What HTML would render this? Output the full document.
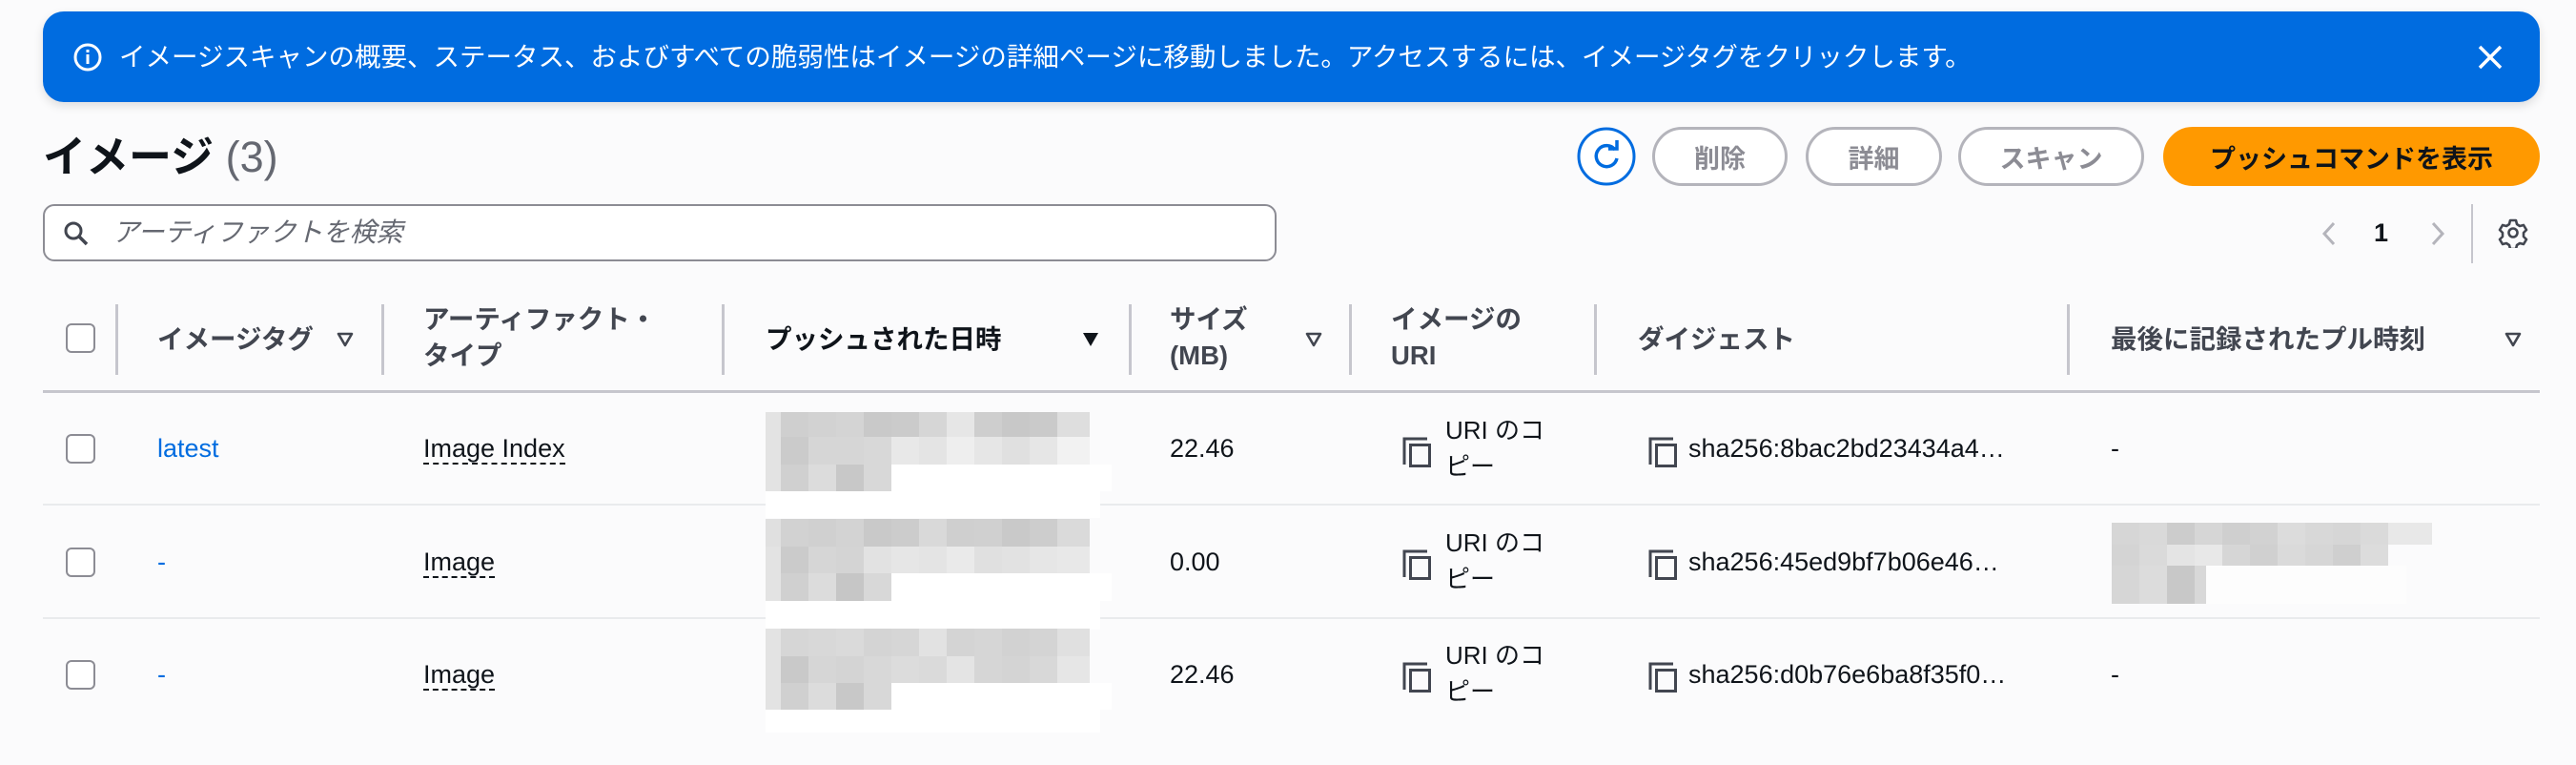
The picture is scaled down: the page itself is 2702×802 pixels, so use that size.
<!DOCTYPE html>
<html><head><meta charset="utf-8"><style>
*{box-sizing:border-box;margin:0;padding:0}
body{width:2702px;height:802px;background:#fbfbfc;font-family:"Liberation Sans","Noto Sans CJK JP",sans-serif;position:relative;overflow:hidden;color:#0f141a}
.a{position:absolute;white-space:nowrap}
.banner{left:45px;top:12px;width:2619px;height:95px;background:#006ce0;border-radius:22px;box-shadow:0 4px 10px rgba(0,0,0,.12)}
.btn{position:absolute;top:133px;height:62px;border:3px solid #b4b4bb;border-radius:31px;color:#8c8c94;font-size:27px;font-weight:bold;display:flex;align-items:center;justify-content:center;background:#fff}
.hd{position:absolute;font-size:27.5px;font-weight:bold;color:#424650;line-height:38px}
.div{position:absolute;top:319px;width:3px;height:74px;background:#c6c6cd}
.cb{position:absolute;left:69px;width:31px;height:31px;border:2px solid #8c8c94;border-radius:6px;background:#fff}
.td{position:absolute;font-size:27px;color:#0f141a;line-height:38px}
.sep{position:absolute;left:45px;width:2619px;height:2px;background:#e9ebed}
.dash{border-bottom:2px dashed #0f141a}
.band{position:absolute;display:flex}
.band span{display:block;width:29px;height:100%}
</style></head><body>
<div class="a banner"></div>
<svg class="a" style="left:76px;top:44px" width="32" height="32" viewBox="0 0 32 32"><circle cx="16" cy="16" r="13" fill="none" stroke="#fff" stroke-width="3"/><rect x="14.5" y="13" width="3" height="10" fill="#fff"/><rect x="14.5" y="8" width="3" height="3" fill="#fff"/></svg>
<div class="a" style="left:125px;top:42px;font-size:27.5px;color:#fff;line-height:36px">イメージスキャンの概要、ステータス、およびすべての脆弱性はイメージの詳細ページに移動しました。アクセスするには、イメージタグをクリックします。</div>
<svg class="a" style="left:2598px;top:46px" width="28" height="28" viewBox="0 0 28 28"><path d="M3 3L25 25M25 3L3 25" stroke="#fff" stroke-width="3.5"/></svg>

<div class="a" style="left:45px;top:136px;font-size:45px;font-weight:bold;line-height:58px">イメージ <span style="font-weight:normal;color:#656871">(3)</span></div>

<svg class="a" style="left:1654px;top:133px" width="62" height="62" viewBox="0 0 62 62"><circle cx="31" cy="31" r="29" fill="#fff" stroke="#006ce0" stroke-width="3"/><path d="M40 24A11 11 0 1 0 42 33" fill="none" stroke="#006ce0" stroke-width="3.5"/><path d="M33 23L42 23L42 14" fill="none" stroke="#006ce0" stroke-width="3.5"/></svg>
<div class="btn" style="left:1733px;width:142px">削除</div>
<div class="btn" style="left:1894px;width:143px">詳細</div>
<div class="btn" style="left:2054px;width:195px">スキャン</div>
<div class="btn" style="left:2269px;width:395px;background:#ff9900;border-color:#ff9900;color:#0f141a">プッシュコマンドを表示</div>

<div class="a" style="left:45px;top:214px;width:1294px;height:60px;border:2px solid #8c8c94;border-radius:12px;background:#fff"></div>
<svg class="a" style="left:66px;top:231px" width="28" height="28" viewBox="0 0 28 28"><circle cx="11" cy="11" r="8" fill="none" stroke="#424650" stroke-width="3"/><path d="M17 17L25 25" stroke="#424650" stroke-width="3.5"/></svg>
<div class="a" style="left:118px;top:225px;font-size:28px;font-style:italic;color:#656871;line-height:38px">アーティファクトを検索</div>

<svg class="a" style="left:2433px;top:231px" width="20" height="28" viewBox="0 0 20 28"><path d="M15 3L5 14L15 25" fill="none" stroke="#b4b4bb" stroke-width="3"/></svg>
<div class="a" style="left:2490px;top:226px;font-size:27px;font-weight:bold;line-height:36px">1</div>
<svg class="a" style="left:2547px;top:231px" width="20" height="28" viewBox="0 0 20 28"><path d="M5 3L15 14L5 25" fill="none" stroke="#b4b4bb" stroke-width="3"/></svg>
<div class="a" style="left:2592px;top:214px;width:2px;height:62px;background:#c6c6cd"></div>
<svg class="a" style="left:2620px;top:228px" width="32" height="32" viewBox="0 0 32 32"><path d="M13 3h6l1 4 3 2 4-1 3 5-3 3v4l3 3-3 5-4-1-3 2-1 4h-6l-1-4-3-2-4 1-3-5 3-3v-4L2 13l3-5 4 1 3-2z" fill="none" stroke="#424650" stroke-width="2.6" stroke-linejoin="round"/><circle cx="16" cy="16" r="4.5" fill="none" stroke="#424650" stroke-width="2.6"/></svg>

<div class="cb" style="top:339px"></div>
<div class="div" style="left:121px"></div>
<div class="hd" style="left:165px;top:337px">イメージタグ</div>
<svg class="a" style="left:352px;top:346px" width="20" height="20" viewBox="0 0 20 20"><path d="M3 4H17L10 16Z" fill="none" stroke="#424650" stroke-width="2.6" stroke-linejoin="round"/></svg>
<div class="div" style="left:400px"></div>
<div class="hd" style="left:444px;top:316px">アーティファクト・<br>タイプ</div>
<div class="div" style="left:757px"></div>
<div class="hd" style="left:803px;top:337px;color:#0f141a">プッシュされた日時</div>
<svg class="a" style="left:1134px;top:346px" width="20" height="20" viewBox="0 0 20 20"><path d="M2 3H18L10 17Z" fill="#0f141a"/></svg>
<div class="div" style="left:1184px"></div>
<div class="hd" style="left:1227px;top:316px">サイズ<br>(MB)</div>
<svg class="a" style="left:1368px;top:346px" width="20" height="20" viewBox="0 0 20 20"><path d="M3 4H17L10 16Z" fill="none" stroke="#424650" stroke-width="2.6" stroke-linejoin="round"/></svg>
<div class="div" style="left:1415px"></div>
<div class="hd" style="left:1459px;top:316px">イメージの<br>URI</div>
<div class="div" style="left:1672px"></div>
<div class="hd" style="left:1718px;top:337px">ダイジェスト</div>
<div class="div" style="left:2168px"></div>
<div class="hd" style="left:2214px;top:337px">最後に記録されたプル時刻</div>
<svg class="a" style="left:2626px;top:346px" width="20" height="20" viewBox="0 0 20 20"><path d="M3 4H17L10 16Z" fill="none" stroke="#424650" stroke-width="2.6" stroke-linejoin="round"/></svg>
<div class="a" style="left:45px;top:409px;width:2619px;height:3px;background:#c6c6cd"></div>

<!-- rows -->
<div class="cb" style="top:455px"></div>
<div class="td" style="left:165px;top:451px;color:#006ce0">latest</div>
<div class="td" style="left:444px;top:451px"><span class="dash">Image Index</span></div>
<div class="td" style="left:1227px;top:451px">22.46</div>
<div class="sep" style="top:528px"></div>
<div class="cb" style="top:574px"></div>
<div class="td" style="left:165px;top:570px;color:#006ce0">-</div>
<div class="td" style="left:444px;top:570px"><span class="dash">Image</span></div>
<div class="td" style="left:1227px;top:570px">0.00</div>
<div class="sep" style="top:647px"></div>
<div class="cb" style="top:692px"></div>
<div class="td" style="left:165px;top:688px;color:#006ce0">-</div>
<div class="td" style="left:444px;top:688px"><span class="dash">Image</span></div>
<div class="td" style="left:1227px;top:688px">22.46</div>

<!-- blur blocks date -->
<div class="band" style="left:803px;top:432px;height:26px"><span style="background:#e3e3e3;width:16px"></span><span style="background:#cfcfcf"></span><span style="background:#d2d2d2"></span><span style="background:#d4d4d4"></span><span style="background:#c9c9c9"></span><span style="background:#cbcbcb"></span><span style="background:#d6d6d6"></span><span style="background:#e6e6e6"></span><span style="background:#cecece"></span><span style="background:#c8c8c8"></span><span style="background:#cacaca"></span><span style="background:#dedede;width:34px"></span></div>
<div class="band" style="left:803px;top:458px;height:29px"><span style="background:#e3e3e3;width:16px"></span><span style="background:#cbcbcb"></span><span style="background:#d6d6d6"></span><span style="background:#d6d6d6"></span><span style="background:#d8d8d8"></span><span style="background:#e8e8e8"></span><span style="background:#e4e4e4"></span><span style="background:#eeeeee"></span><span style="background:#e6e6e6"></span><span style="background:#e0e0e0"></span><span style="background:#e6e6e6"></span><span style="background:#f2f2f2;width:34px"></span></div>
<div class="band" style="left:803px;top:487px;height:28px"><span style="background:#e3e3e3;width:16px"></span><span style="background:#d0d0d0"></span><span style="background:#dcdcdc"></span><span style="background:#c8c8c8"></span><span style="background:#d8d8d8"></span><span style="background:#fff;width:231px"></span></div>
<div class="a" style="left:803px;top:515px;width:351px;height:28px;background:#fff"></div>

<div class="band" style="left:803px;top:544px;height:29px"><span style="background:#e0e0e0;width:16px"></span><span style="background:#d2d2d2"></span><span style="background:#d0d0d0"></span><span style="background:#d3d3d3"></span><span style="background:#c9c9c9"></span><span style="background:#cccccc"></span><span style="background:#d9d9d9"></span><span style="background:#cfcfcf"></span><span style="background:#d0d0d0"></span><span style="background:#c9c9c9"></span><span style="background:#cdcdcd"></span><span style="background:#dadada;width:34px"></span></div>
<div class="band" style="left:803px;top:573px;height:28px"><span style="background:#e3e3e3;width:16px"></span><span style="background:#cbcbcb"></span><span style="background:#d6d6d6"></span><span style="background:#d4d4d4"></span><span style="background:#e2e2e2"></span><span style="background:#e6e6e6"></span><span style="background:#e4e4e4"></span><span style="background:#eaeaea"></span><span style="background:#e0e0e0"></span><span style="background:#e2e2e2"></span><span style="background:#e6e6e6"></span><span style="background:#e8e8e8;width:34px"></span></div>
<div class="band" style="left:803px;top:601px;height:29px"><span style="background:#e3e3e3;width:16px"></span><span style="background:#d0d0d0"></span><span style="background:#dcdcdc"></span><span style="background:#c6c6c6"></span><span style="background:#d8d8d8"></span><span style="background:#fff;width:231px"></span></div>
<div class="a" style="left:803px;top:630px;width:351px;height:30px;background:#fff"></div>

<div class="band" style="left:803px;top:659px;height:29px"><span style="background:#e3e3e3;width:16px"></span><span style="background:#d6d6d6"></span><span style="background:#d8d8d8"></span><span style="background:#dadada"></span><span style="background:#d4d4d4"></span><span style="background:#d6d6d6"></span><span style="background:#e2e2e2"></span><span style="background:#d4d4d4"></span><span style="background:#d6d6d6"></span><span style="background:#d2d2d2"></span><span style="background:#d4d4d4"></span><span style="background:#e0e0e0;width:34px"></span></div>
<div class="band" style="left:803px;top:688px;height:28px"><span style="background:#e3e3e3;width:16px"></span><span style="background:#c9c9c9"></span><span style="background:#d6d6d6"></span><span style="background:#d4d4d4"></span><span style="background:#d8d8d8"></span><span style="background:#dcdcdc"></span><span style="background:#dadada"></span><span style="background:#e4e4e4"></span><span style="background:#d6d6d6"></span><span style="background:#d4d4d4"></span><span style="background:#d8d8d8"></span><span style="background:#e6e6e6;width:34px"></span></div>
<div class="band" style="left:803px;top:716px;height:28px"><span style="background:#e3e3e3;width:16px"></span><span style="background:#d0d0d0"></span><span style="background:#dcdcdc"></span><span style="background:#c8c8c8"></span><span style="background:#d8d8d8"></span><span style="background:#fff;width:231px"></span></div>
<div class="a" style="left:803px;top:744px;width:351px;height:24px;background:#fff"></div>

<!-- URI copy + digest -->
<svg class="a" style="left:1470px;top:457px" width="34" height="34" viewBox="0 0 34 34"><path d="M3 30V3H27" fill="none" stroke="#424650" stroke-width="3"/><rect x="9.5" y="9.5" width="20" height="22" fill="none" stroke="#424650" stroke-width="3"/></svg>
<div class="td" style="left:1516px;top:432px;font-size:26px">URI のコ<br>ピー</div>
<svg class="a" style="left:1728px;top:457px" width="34" height="34" viewBox="0 0 34 34"><path d="M3 30V3H27" fill="none" stroke="#424650" stroke-width="3"/><rect x="9.5" y="9.5" width="20" height="22" fill="none" stroke="#424650" stroke-width="3"/></svg>
<div class="td" style="left:1771px;top:451px">sha256:8bac2bd23434a4…</div>
<div class="td" style="left:2214px;top:451px">-</div>

<svg class="a" style="left:1470px;top:575px" width="34" height="34" viewBox="0 0 34 34"><path d="M3 30V3H27" fill="none" stroke="#424650" stroke-width="3"/><rect x="9.5" y="9.5" width="20" height="22" fill="none" stroke="#424650" stroke-width="3"/></svg>
<div class="td" style="left:1516px;top:550px;font-size:26px">URI のコ<br>ピー</div>
<svg class="a" style="left:1728px;top:575px" width="34" height="34" viewBox="0 0 34 34"><path d="M3 30V3H27" fill="none" stroke="#424650" stroke-width="3"/><rect x="9.5" y="9.5" width="20" height="22" fill="none" stroke="#424650" stroke-width="3"/></svg>
<div class="td" style="left:1771px;top:570px">sha256:45ed9bf7b06e46…</div>
<div class="band" style="left:2215px;top:548px;height:23px"><span style="background:#d6d6d6"></span><span style="background:#d9d9d9"></span><span style="background:#cccccc"></span><span style="background:#d6d6d6"></span><span style="background:#cfcfcf"></span><span style="background:#d2d2d2"></span><span style="background:#dcdcdc"></span><span style="background:#d8d8d8"></span><span style="background:#d6d6d6"></span><span style="background:#dadada"></span><span style="background:#e8e8e8;width:46px"></span></div>
<div class="band" style="left:2215px;top:571px;height:22px"><span style="background:#d4d4d4"></span><span style="background:#dadada"></span><span style="background:#e4e4e4"></span><span style="background:#e8e8e8"></span><span style="background:#d6d6d6"></span><span style="background:#d0d0d0"></span><span style="background:#dadada"></span><span style="background:#d6d6d6"></span><span style="background:#cfcfcf"></span><span style="background:#dcdcdc"></span></div>
<div class="band" style="left:2215px;top:593px;height:40px"><span style="background:#d6d6d6"></span><span style="background:#dcdcdc"></span><span style="background:#c8c8c8"></span><span style="background:#d8d8d8;width:12px"></span><span style="background:#fdfdfd;width:210px"></span></div>

<svg class="a" style="left:1470px;top:693px" width="34" height="34" viewBox="0 0 34 34"><path d="M3 30V3H27" fill="none" stroke="#424650" stroke-width="3"/><rect x="9.5" y="9.5" width="20" height="22" fill="none" stroke="#424650" stroke-width="3"/></svg>
<div class="td" style="left:1516px;top:668px;font-size:26px">URI のコ<br>ピー</div>
<svg class="a" style="left:1728px;top:693px" width="34" height="34" viewBox="0 0 34 34"><path d="M3 30V3H27" fill="none" stroke="#424650" stroke-width="3"/><rect x="9.5" y="9.5" width="20" height="22" fill="none" stroke="#424650" stroke-width="3"/></svg>
<div class="td" style="left:1771px;top:688px">sha256:d0b76e6ba8f35f0…</div>
<div class="td" style="left:2214px;top:688px">-</div>
</body></html>
